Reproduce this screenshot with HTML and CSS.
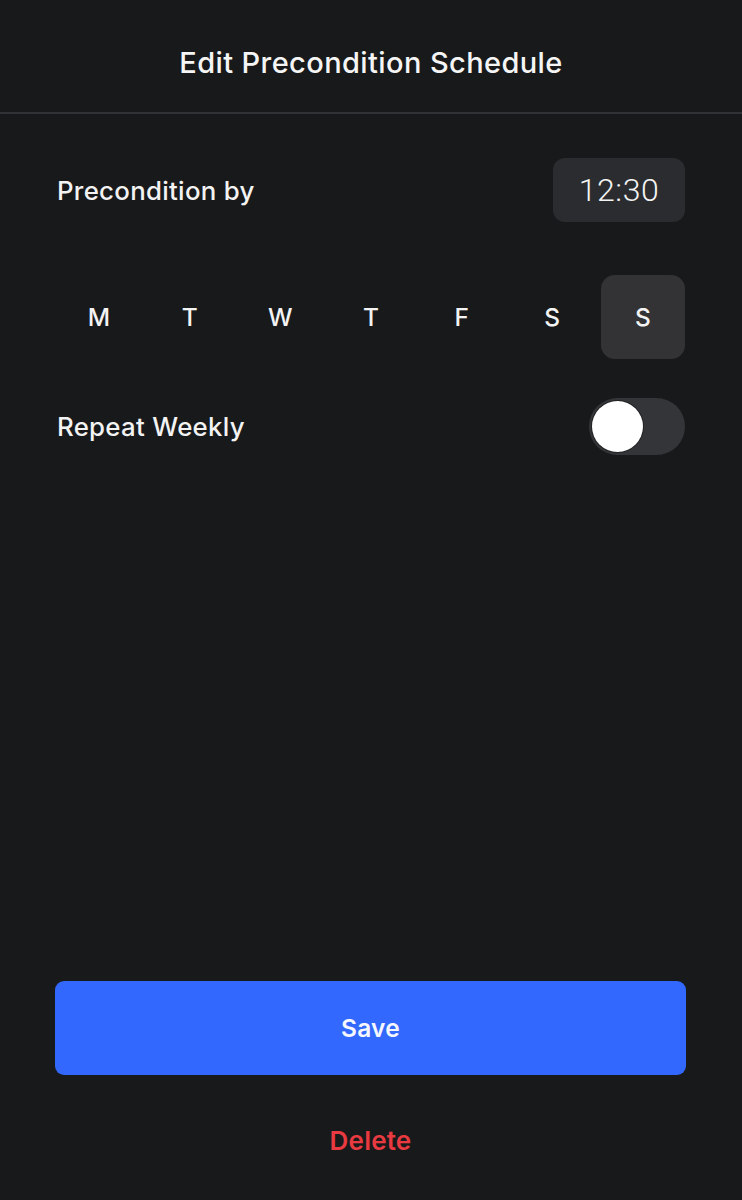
FILE: index.html
```html
<!DOCTYPE html>
<html>
<head>
<meta charset="utf-8">
<link rel="stylesheet" href="styles.css">
</head>
<body>
<div class="page">
  <header class="header">
    <h1 class="title">Edit Precondition Schedule</h1>
  </header>
  <main class="content">
    <div class="row time-row">
      <span class="label">Precondition by</span>
      <span class="time">12:30</span>
    </div>
    <div class="days">
      <span class="day">M</span>
      <span class="day">T</span>
      <span class="day">W</span>
      <span class="day">T</span>
      <span class="day">F</span>
      <span class="day">S</span>
      <span class="day selected">S</span>
    </div>
    <div class="row repeat-row">
      <span class="label">Repeat Weekly</span>
      <span class="toggle"><span class="knob"></span></span>
    </div>
  </main>
  <footer class="footer">
    <button class="save">Save</button>
    <div class="delete">Delete</div>
  </footer>
</div>
</body>
</html>
```

FILE: styles.css
```css
* { box-sizing: border-box; }
html, body { margin: 0; padding: 0; background: #18191b; }
body {
  font-family: Inter, Roboto, "Liberation Sans", sans-serif;
  color: #f2f2f2;
}
.page {
  height: 1200px;
  display: flex;
  flex-direction: column;
}
.header {
  height: 114px;
  border-bottom: 2px solid #313235;
  display: flex;
  align-items: flex-start;
  justify-content: center;
}
.title {
  margin: 0;
  margin-top: 43px;
  font-size: 29px;
  line-height: 40px;
  font-weight: 500;
  letter-spacing: 0.4px;
  color: #f5f5f5;
}
.content {
  padding: 44px 57px 0 57px;
}
.row {
  display: flex;
  align-items: center;
  justify-content: space-between;
}
.label {
  font-size: 25.8px;
  font-weight: 500;
  letter-spacing: 0.3px;
  color: #f3f3f3;
}
.time-row { height: 64px; }
.time {
  width: 132px;
  height: 64px;
  border-radius: 12px;
  background: #2b2c2f;
  display: flex;
  align-items: center;
  justify-content: center;
  font-family: Roboto, "Liberation Sans", sans-serif;
  font-size: 32px;
  font-weight: 300;
  letter-spacing: 0.6px;
  color: #f4f4f4;
}
.days {
  margin-top: 53px;
  display: grid;
  grid-template-columns: repeat(7, 84px);
  column-gap: 6.67px;
}
.day {
  height: 84px;
  border-radius: 14px;
  display: flex;
  align-items: center;
  justify-content: center;
  font-size: 24.5px;
  font-weight: 500;
  color: #f3f3f3;
}
.day.selected { background: #333335; }
.repeat-row {
  margin-top: 39px;
  height: 57px;
}
.toggle {
  width: 96px;
  height: 57px;
  border-radius: 29px;
  background: #343538;
  display: flex;
  align-items: center;
  padding-left: 3px;
}
.knob {
  width: 51px;
  height: 51px;
  border-radius: 50%;
  background: #ffffff;
  box-shadow: 0 0 0 1px rgba(0,0,0,0.35);
}
.footer {
  margin-top: auto;
  padding: 0 56px 39px 55px;
  display: flex;
  flex-direction: column;
  align-items: stretch;
}
.save {
  height: 94px;
  border: none;
  border-radius: 9px;
  background: #3268fd;
  color: #f5f7ff;
  font-family: Inter, Roboto, "Liberation Sans", sans-serif;
  font-size: 24.5px;
  font-weight: 600;
  letter-spacing: 0.2px;
}
.delete {
  margin-top: 46px;
  height: 40px;
  line-height: 40px;
  text-align: center;
  font-size: 26px;
  font-weight: 600;
  letter-spacing: 0.2px;
  color: #e83a40;
}
```
